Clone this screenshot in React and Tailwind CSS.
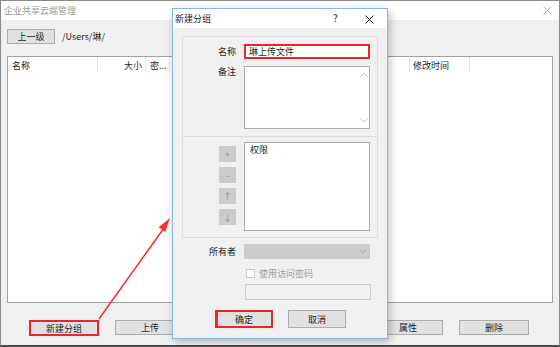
import React from "react";

// the two middle buttons sit behind the dialog, so they carry no visible label
const BOTTOM_BUTTONS = ["新建分组", "上传", "", "", "属性", "删除"];

const Chevron = ({ up, className }) => (
  <svg width="8" height="5" viewBox="0 0 8 5" className={className}>
    <path
      d={up ? "M0.5 4.5 L4 1 L7.5 4.5" : "M0.5 0.5 L4 4 L7.5 0.5"}
      fill="none"
      stroke="currentColor"
      strokeWidth="1"
    />
  </svg>
);

const CloseX = ({ className }) => (
  <svg width="9" height="9" viewBox="0 0 9 9" className={className}>
    <path d="M0.5 0.5 L8.5 8.5 M8.5 0.5 L0.5 8.5" stroke="currentColor" strokeWidth="1" />
  </svg>
);

function NewGroupDialog() {
  return (
    <div className="absolute left-[171px] top-[7px] w-[216px] h-[331px] flex flex-col bg-[#f0f0f0] border border-[#86b6e6] shadow-[2px_3px_8px_rgba(0,0,0,0.25)]">
      <div className="h-[19px] bg-white flex items-center relative">
        <span className="pl-[2px]">新建分组</span>
        <span className="absolute left-[160px] top-[4px] text-[10px]">?</span>
        <CloseX className="absolute left-[192px] top-[6px] text-[#222]" />
      </div>

      <div className="mt-[8px] mx-[9px] h-[101px] border border-[#dcdcdc] flex flex-col pt-[7px]">
        <div className="flex items-center">
          <span className="w-[53px] text-right">名称</span>
          <div className="ml-[8px] w-[126px] h-[15px] bg-white border-2 border-[#e8262e] flex items-center pl-[3px]">
            琳上传文件
          </div>
        </div>
        <div className="flex mt-[7px]">
          <span className="w-[53px] text-right pt-[1px]">备注</span>
          <div className="ml-[8px] w-[126px] h-[63px] bg-white border border-[#adadad] flex justify-end">
            <div className="w-[11px] flex flex-col justify-between items-center py-[5px] text-[#c0c0c0]">
              <Chevron up />
              <Chevron />
            </div>
          </div>
        </div>
      </div>

      <div className="mx-[9px] h-[101px] border border-t-0 border-[#dcdcdc] flex pt-[5px]">
        <div className="w-[53px] flex flex-col items-end gap-[5px] pt-[4px]">
          {["+", "-", "↑", "↓"].map((s) => (
            <div
              key={s}
              className="w-[17px] h-[16px] bg-[#cccccc] text-[#8f8f8f] flex items-center justify-center text-[9px]"
            >
              {s}
            </div>
          ))}
        </div>
        <div className="ml-[8px] w-[126px] h-[89px] bg-white border border-[#adadad] pl-[5px] pt-[2px]">
          权限
        </div>
      </div>

      <div className="mt-[6px] ml-[10px] flex items-center">
        <span className="w-[53px] text-right">所有者</span>
        <div className="ml-[8px] w-[126px] h-[15px] bg-[#cccccc] flex items-center justify-end pr-[3px] text-[#a8a8a8]">
          <Chevron />
        </div>
      </div>

      <div className="mt-[9px] ml-[73px] flex items-center h-[10px]">
        <div className="w-[9px] h-[9px] bg-white border border-[#cccccc]" />
        <span className="ml-[4px] text-[#a0a0a0]">使用访问密码</span>
      </div>

      <div className="mt-[6px] ml-[72px] w-[126px] h-[16px] bg-[#f0f0f0] border border-[#cccccc]" />

      <div className="mt-[10px] ml-[42px] flex gap-[15px]">
        <button className="w-[58px] h-[18px] bg-[#e1e1e1] border-2 border-[#e8262e] shadow-[inset_1px_0_0_#3b6fd1]">
          确定
        </button>
        <button className="w-[58px] h-[18px] bg-[#e1e1e1] border border-[#adadad]">取消</button>
      </div>
    </div>
  );
}

export default function App() {
  return (
    <div className="relative w-[560px] h-[347px] overflow-hidden bg-[#f0f0f0] border border-[#8a8a8a] border-b-2 border-b-[#4a4a4a] font-['Microsoft_YaHei','Noto_Sans_CJK_SC',sans-serif] text-[9px] leading-none text-[#1e1e1e]">
      <div className="h-[19px] bg-white flex items-center relative">
        <span className="pl-[3px] text-[#9a9a9a]">企业共享云端管理</span>
        <CloseX className="absolute left-[542px] top-[5px] text-[#b0b0b0]" />
      </div>

      <div className="px-[6px] flex flex-col">
        <div className="mt-[8px] h-[16px] flex items-center">
          <button className="w-[48px] h-[15px] bg-[#e1e1e1] border border-[#adadad]">上一级</button>
          <span className="ml-[7px]">/Users/琳/</span>
        </div>

        <div className="mt-[12px] h-[247px] bg-white border border-[#a0a0a0]">
          <div className="h-[16px] flex items-center">
            <div className="w-[90px] h-full flex items-center pl-[4px] border-r border-[#e5e5e5]">名称</div>
            <div className="w-[48px] h-full flex items-center justify-end pr-[3px] border-r border-[#e5e5e5]">大小</div>
            <div className="w-[24px] h-full flex items-center pl-[4px] border-r border-[#e5e5e5]">密...</div>
            <div className="w-[240px] h-full border-r border-[#e5e5e5]" />
            <div className="w-[60px] h-full flex items-center pl-[3px] border-r border-[#e5e5e5]">修改时间</div>
          </div>
        </div>

        <div className="mt-[17px] ml-[22px] flex gap-[16px]">
          {BOTTOM_BUTTONS.map((label, i) => (
            <button
              key={i}
              className={
                i === 0
                  ? "w-[70px] h-[16px] bg-[#e1e1e1] border-2 border-[#e8262e]"
                  : "w-[70px] h-[15px] bg-[#e1e1e1] border border-[#adadad]"
              }
            >
              {label}
            </button>
          ))}
        </div>
      </div>

      <NewGroupDialog />

      <svg className="absolute left-0 top-0 pointer-events-none" width="560" height="347">
        <line x1="98" y1="318" x2="163" y2="227" stroke="#ff2b2b" strokeWidth="1.5" />
        <polygon points="169,217 164.3,230.8 157.7,226.2" fill="#ff2b2b" />
      </svg>
    </div>
  );
}
